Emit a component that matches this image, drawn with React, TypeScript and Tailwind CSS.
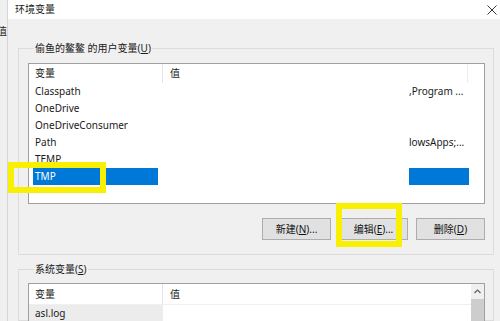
import React from 'react';

const font = { fontFamily: '"Noto Sans", "Noto Sans CJK SC", sans-serif' };

const userVars = [
  { name: 'Classpath', value: ',Program ...' },
  { name: 'OneDrive', value: '' },
  { name: 'OneDriveConsumer', value: '' },
  { name: 'Path', value: 'lowsApps;...' },
  { name: 'TEMP', value: '' },
  { name: 'TMP', value: '', selected: true },
];

const Btn: React.FC<{ label: string; hot: string; tail: string }> = ({ label, hot, tail }) => (
  <button className="w-[69px] h-[22px] bg-[#e1e1e1] border border-[#adadad] text-[10px] leading-[20px] text-[#111]">
    {label}(<span className="underline">{hot}</span>){tail}
  </button>
);

const App: React.FC = () => {
  return (
    <div className="relative flex w-[500px] h-[321px] overflow-hidden bg-[#f0f0f0] text-[#1a1a1a]" style={font}>
      {/* window behind */}
      <div className="w-[8px] shrink-0 border-r border-[#d6d6d6] overflow-hidden">
        <div className="mt-[24px] -ml-[3px] text-[10px] leading-[14px]">值</div>
      </div>

      <div className="flex-1 min-w-0 flex flex-col">
        {/* title bar */}
        <div className="h-[19px] bg-white flex items-center justify-between pl-[7px] pr-[3px]">
          <span className="text-[10px]">环境变量</span>
          <svg width="10" height="10" viewBox="0 0 10 10" className="text-[#333]">
            <path d="M0.5 0.5 L9.5 9.5 M9.5 0.5 L0.5 9.5" stroke="currentColor" strokeWidth="1" />
          </svg>
        </div>

        <div className="flex-1 min-h-0 flex flex-col pl-[10px] pr-[6px] pt-[21px]">
          {/* user variables */}
          <fieldset className="border border-[#dcdcdc] pl-[9px] pr-[8px] pt-[7px] pb-[14px]">
            <legend className="ml-[6px] px-[1px] text-[10px] leading-[16px]">
              偷鱼的鳌鳌 的用户变量(<span className="underline">U</span>)
            </legend>
            <div className="h-[141px] border border-[#a0a0a0] bg-white">
              <div className="h-[19px] flex text-[10px] leading-[19px]">
                <div className="w-[134px] pl-[6px] border-r border-[#e5e5e5]">变量</div>
                <div className="w-[305px] pl-[7px] border-r border-[#ececec]">值</div>
              </div>
              {userVars.map((v) => (
                <div key={v.name} className="h-[17px] flex text-[10px] leading-[17px]">
                  <div className="w-[134px] flex">
                    <div className={`ml-[4px] w-[125px] pl-[2px] ${v.selected ? 'bg-[#0078d7] text-white' : ''}`}>{v.name}</div>
                  </div>
                  <div className="flex-1 flex justify-end pr-[15px]">
                    <div className={`w-[60px] whitespace-nowrap ${v.selected ? 'bg-[#0078d7]' : ''}`}>{v.value}</div>
                  </div>
                </div>
              ))}
            </div>
            <div className="mt-[14px] flex justify-end gap-[8px]">
              <Btn label="新建" hot="N" tail="..." />
              <Btn label="编辑" hot="E" tail="..." />
              <Btn label="删除" hot="D" tail="" />
            </div>
          </fieldset>

          {/* system variables */}
          <fieldset className="mt-[6px] flex-1 min-h-0 border border-[#dcdcdc] pl-[9px] pr-[8px] pt-[6px]">
            <legend className="ml-[6px] px-[1px] text-[10px] leading-[16px]">
              系统变量(<span className="underline">S</span>)
            </legend>
            <div className="h-[60px] flex border border-[#a0a0a0] bg-white">
              <div className="flex-1">
                <div className="h-[21px] flex text-[10px] leading-[21px] border-b border-[#f0f0f0]">
                  <div className="w-[134px] pl-[6px] border-r border-[#e5e5e5]">变量</div>
                  <div className="pl-[7px]">值</div>
                </div>
                <div className="h-[17px] flex text-[10px] leading-[17px]">
                  <div className="w-[134px] pl-[6px] bg-[#ececec]">asl.log</div>
                </div>
              </div>
              <div className="w-[13px] bg-[#f0f0f0] flex flex-col">
                <div className="h-[15px] flex items-center justify-center">
                  <svg width="7" height="5" viewBox="0 0 7 5">
                    <path d="M0.5 4 L3.5 1 L6.5 4" fill="none" stroke="#606060" strokeWidth="1.2" />
                  </svg>
                </div>
                <div className="flex-1 bg-[#cdcdcd]" />
              </div>
            </div>
          </fieldset>
        </div>
      </div>

      {/* annotations */}
      <div className="absolute left-[8px] top-[162px] w-[98px] h-[31px] border-[6px] border-[#f8f000]" />
      <div className="absolute left-[336px] top-[203px] w-[66px] h-[44px] border-[6px] border-[#f8f000]" />
    </div>
  );
};

export default App;
